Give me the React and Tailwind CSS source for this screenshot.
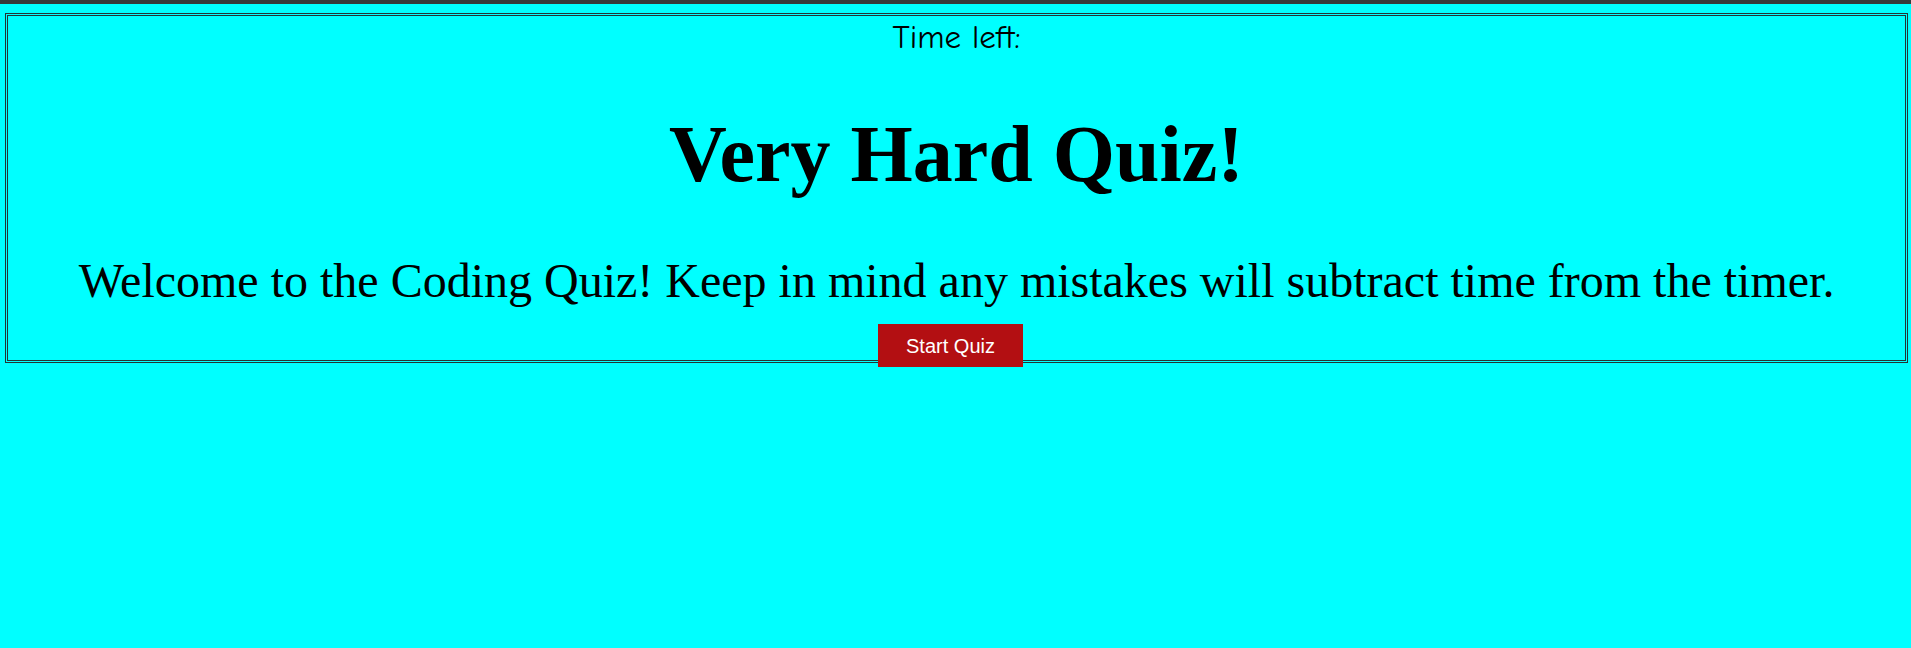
import React from 'react';

const App = () => {
  return (
    <div className="min-h-screen bg-[#00ffff] border-t-4 border-[#363a3a]">
      <div className="mt-[9px] ml-[5px] mr-[3px] h-[350px] border-[3px] border-double border-[#233535] text-center text-black">
        <div className="pt-[2px] text-[33px] leading-[38px] font-['Comic_Sans_MS','Comic_Neue','DejaVu_Sans',sans-serif]">
          Time left:
        </div>
        <h1 className="mt-[52px] text-[80px] leading-[92px] font-bold font-['Liberation_Serif','Times_New_Roman',serif]">
          Very Hard Quiz!
        </h1>
        <p className="mt-[53px] text-[48px] leading-[55px] font-['Liberation_Serif','Times_New_Roman',serif]">
          Welcome to the Coding Quiz! Keep in mind any mistakes will subtract time from the timer.
        </p>
        <button className="mt-[16px] mr-[12px] h-[43px] px-[28px] bg-[#b30f12] text-white text-[20px] font-['Liberation_Sans',Arial,sans-serif]">
          Start Quiz
        </button>
      </div>
    </div>
  );
};

export default App;
